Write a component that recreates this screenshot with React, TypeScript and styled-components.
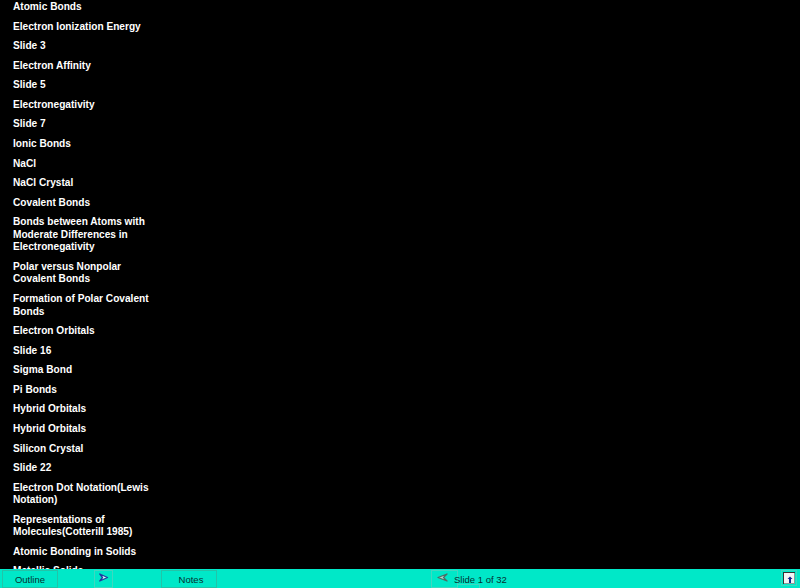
import React from "react";
import styled, { createGlobalStyle } from "styled-components";

const Global = createGlobalStyle`
  html, body { margin: 0; padding: 0; background: #000; height: 100%; overflow: hidden; }
  #root { height: 100%; }
`;
const Page = styled.div`
  width: 800px; height: 588px; display: flex; flex-direction: column; background: #000; overflow: hidden;
  font-family: "Liberation Sans", Arial, sans-serif;
`;
const Outline = styled.ul`
  flex: 1; min-height: 0; overflow: hidden; margin: 0; padding: 1px 0 0 13px; width: 140px; list-style: none;
  display: flex; flex-direction: column; gap: 7px;
`;
const Entry = styled.li`
  flex: none; width: 140px; color: #fff; font-size: 10.15px; font-weight: 700; line-height: 12.56px;
`;
const Bar = styled.div`
  flex: none; height: 19px; background: #00e8c8; display: flex; align-items: stretch; position: relative;
  font-size: 9.5px; color: #043030;
`;
const TextButton = styled.div<{ $w: number; $ml: number; $pl: number }>`
  width: ${p => p.$w}px; margin-left: ${p => p.$ml}px; margin-top: 1px; box-sizing: border-box;
  border: 1px solid #22c4a8; padding-left: ${p => p.$pl}px; display: flex; align-items: center; justify-content: center;
`;
const IconButton = styled.div<{ $w: number; $ml: number }>`
  width: ${p => p.$w}px; margin-left: ${p => p.$ml}px; margin-top: 1px; box-sizing: border-box;
  border: 1px solid #3fd8c0; display: flex; align-items: flex-start; padding: 2px 0 0 4px;
`;
const Status = styled.div`
  margin-left: -4px; display: flex; align-items: center; font-size: 9.5px; color: #043030; width: 60px; white-space: nowrap; margin-top: 1px;
`;
const Peek = styled.div`
  position: absolute; left: 457px; top: 15px; width: 23px; height: 6px; border: 1px solid #3fd8c0; box-sizing: border-box;
`;
const Corner = styled.div`
  margin-left: auto; margin-right: 3px; margin-top: 1px; width: 16px; height: 16px; box-sizing: border-box;
  border: 1px solid #3fd8c0; padding: 1px; display: flex;
`;

const items = ["Atomic Bonds","Electron Ionization Energy","Slide 3","Electron Affinity","Slide 5","Electronegativity","Slide 7","Ionic Bonds","NaCl","NaCl Crystal","Covalent Bonds","Bonds between Atoms with Moderate Differences in Electronegativity","Polar versus Nonpolar Covalent Bonds","Formation of Polar Covalent Bonds","Electron Orbitals","Slide 16","Sigma Bond","Pi Bonds","Hybrid Orbitals","Hybrid Orbitals","Silicon Crystal","Slide 22","Electron Dot Notation(Lewis Notation)","Representations of Molecules(Cotterill 1985)","Atomic Bonding in Solids","Metallic Solids"];

export default function App() {
  return (
    <Page>
      <Global />
      <Outline>
        {items.map((t, i) => <Entry key={i}>{t}</Entry>)}
      </Outline>
      <Bar>
        <TextButton $w={56} $ml={2} $pl={0}>Outline</TextButton>
        <IconButton $w={19} $ml={36}>
          <svg width="10" height="10" viewBox="0 0 10 10"><path d="M0.8 1 L8.5 4.5 L0.8 8 L3.5 4.5 Z" fill="#d8fff4" stroke="#1f3aa0" strokeWidth="1.3" strokeLinejoin="round" /></svg>
        </IconButton>
        <TextButton $w={56} $ml={48} $pl={4}>Notes</TextButton>
        <IconButton $w={27} $ml={214}>
          <svg width="12" height="10" viewBox="0 0 12 10"><path d="M11 1 L2 4.5 L11 8 L7.5 4.5 Z" fill="#b4d8cc" stroke="#4a6e66" strokeWidth="1.3" strokeLinejoin="round" /></svg>
        </IconButton>
        <Status>Slide 1 of 32</Status>
        <Peek />
        <Corner>
          <svg width="12" height="12" viewBox="0 0 12 12">
            <rect x="0.5" y="0.5" width="11" height="11" fill="#f4f4f4" stroke="#8a9a98" />
            <path d="M0 0H12V1H1V12H0Z" fill="#333" />
            <path d="M7 4.5 L9.5 7 H8 V11 H6 V7 H4.5 Z" fill="#10208a" />
          </svg>
        </Corner>
      </Bar>
    </Page>
  );
}
